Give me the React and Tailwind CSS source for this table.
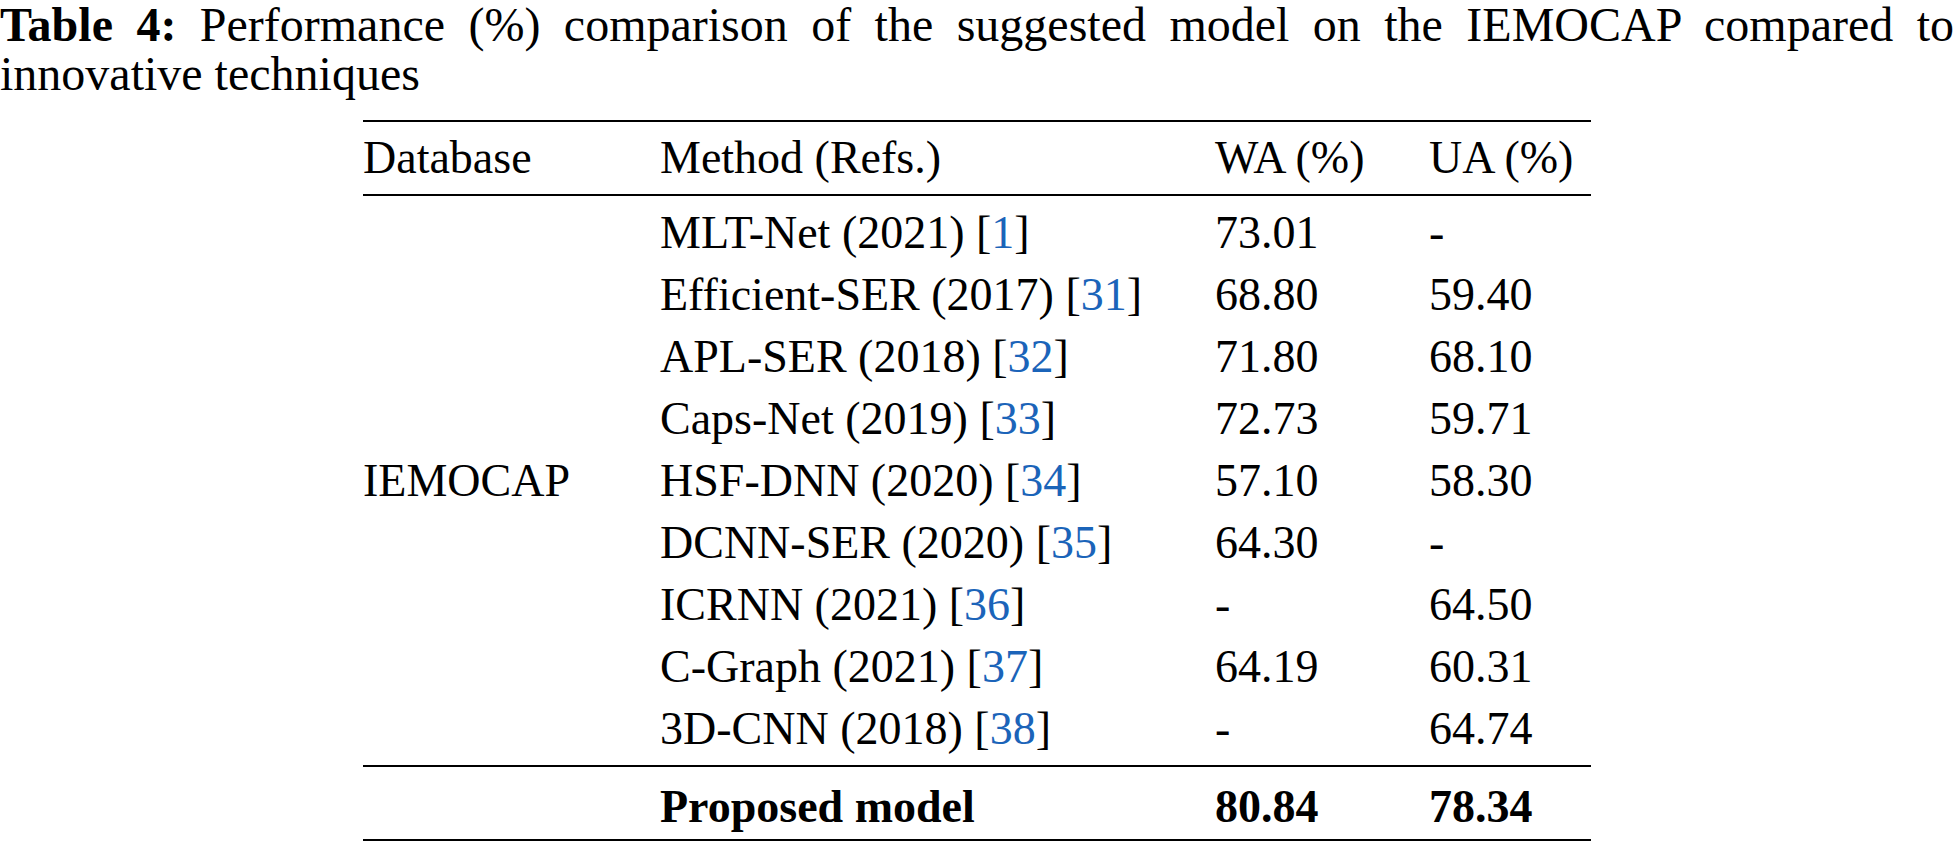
import React from "react";

const rows = [
    { method: "MLT-Net (2021)", ref: "1", wa: "73.01", ua: "-" },
    { method: "Efficient-SER (2017)", ref: "31", wa: "68.80", ua: "59.40" },
    { method: "APL-SER (2018)", ref: "32", wa: "71.80", ua: "68.10" },
    { method: "Caps-Net (2019)", ref: "33", wa: "72.73", ua: "59.71" },
    { method: "HSF-DNN (2020)", ref: "34", wa: "57.10", ua: "58.30" },
    { method: "DCNN-SER (2020)", ref: "35", wa: "64.30", ua: "-" },
    { method: "ICRNN (2021)", ref: "36", wa: "-", ua: "64.50" },
    { method: "C-Graph (2021)", ref: "37", wa: "64.19", ua: "60.31" },
    { method: "3D-CNN (2018)", ref: "38", wa: "-", ua: "64.74" },
];

const App = () => {
    return (
        <div className="min-h-screen bg-white text-black [font-family:'Liberation_Serif','Times_New_Roman',serif]">
            <p className="text-[48px] leading-[49px] text-justify">
                <b>Table 4:</b> Performance (%) comparison of the suggested model on the IEMOCAP compared to innovative techniques
            </p>

            <div className="ml-[363px] w-[1228px] mt-[22px] text-[46px] leading-none">
                <div className="border-t-2 border-b-2 border-black grid grid-cols-[297px_555px_214px_162px] h-[76px] items-center">
                    <div>Database</div>
                    <div>Method (Refs.)</div>
                    <div>WA (%)</div>
                    <div>UA (%)</div>
                </div>

                <div className="grid grid-cols-[297px_555px_214px_162px] pt-[6px] pb-[5px]">
                    <div className="row-span-9 flex items-center">IEMOCAP</div>
                    {rows.map((item, index) => (
                        <React.Fragment key={index}>
                            <div className="h-[62px] flex items-center">
                                {item.method}&nbsp;[<span className="text-[#1b64b9]">{item.ref}</span>]
                            </div>
                            <div className="h-[62px] flex items-center">{item.wa}</div>
                            <div className="h-[62px] flex items-center">{item.ua}</div>
                        </React.Fragment>
                    ))}
                </div>

                <div className="border-t-2 border-b-2 border-black grid grid-cols-[297px_555px_214px_162px] h-[76px] items-center font-bold pt-[8px]">
                    <div></div>
                    <div>Proposed model</div>
                    <div>80.84</div>
                    <div>78.34</div>
                </div>
            </div>
        </div>
    );
};

export default App;
